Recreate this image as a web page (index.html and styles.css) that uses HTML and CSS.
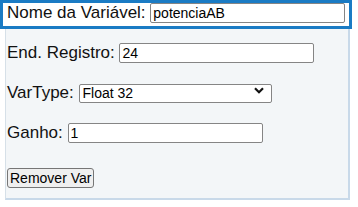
FILE: index.html
```html
<!DOCTYPE html>
<html lang="pt">
<head>
    <meta charset="UTF-8">
    <meta name="viewport" content="width=device-width, initial-scale=1.0">
    <title>Variável</title>
    <link rel="stylesheet" href="styles.css">
</head>
<body>
    <div class="var-panel">
        <div class="field active">
            <label for="var-nome">Nome da Variável:</label> <input type="text" id="var-nome" class="field-input" value="potenciaAB">
        </div>
        <div class="field">
            <label for="var-reg">End. Registro:</label> <input type="text" id="var-reg" class="field-input" value="24">
        </div>
        <div class="field">
            <label for="var-type">VarType:</label> <span class="select-wrap"><select id="var-type" class="field-select">
                <option>Float 32</option>
                <option>Int 16</option>
                <option>UInt 16</option>
            </select><svg class="chevron" width="10" height="7" viewBox="0 0 10 7"><path d="M1 1.2 L5 5.2 L9 1.2" fill="none" stroke="#111" stroke-width="2.2"/></svg></span>
        </div>
        <div class="field">
            <label for="var-ganho">Ganho:</label> <input type="text" id="var-ganho" class="field-input" value="1">
        </div>
        <div class="actions">
            <button class="remove-btn">Remover Var</button>
        </div>
    </div>
</body>
</html>
```

FILE: styles.css
```css
body {
    margin: 0;
    background: #fff;
    font-family: "Liberation Sans", Arial, sans-serif;
}
.var-panel {
    margin-left: 5px;
    width: 342px;
    background: #f3f6f8;
    border-left: 1px solid #d6e0e8;
    border-right: 2px solid #c8d9e9;
    border-bottom: 2px solid #c8d9e9;
    padding: 0 0 10px 0;
}
.field {
    margin: 0 -4px 11px -6px;
    padding: 0 3px 3px 4px;
    border: 3px solid transparent;
    font-size: 17px;
    line-height: 20px;
    color: #111;
    white-space: nowrap;
}
.field.active {
    border-color: #1a7bc4;
    background: #fff;
}
.field-input,
.field-select {
    box-sizing: border-box;
    width: 195px;
    height: 20px;
    padding: 0 2px;
    border: 1px solid #858585;
    border-radius: 2px;
    background: #fff;
    font-family: "Liberation Sans", Arial, sans-serif;
    font-size: 14px;
    color: #000;
    vertical-align: baseline;
}
.field-select {
    appearance: none;
    -webkit-appearance: none;
    width: 193px;
    height: 19px;
    padding: 0 3px;
}
.select-wrap {
    position: relative;
}
.chevron {
    position: absolute;
    right: 8px;
    top: 4px;
    pointer-events: none;
}
.actions {
    padding: 8px 0 0 1px;
}
.remove-btn {
    height: 20px;
    padding: 0 2px;
    border: 1px solid #767676;
    border-radius: 3px;
    background: #efefef;
    font-family: "Liberation Sans", Arial, sans-serif;
    font-size: 14px;
    color: #000;
}
```
